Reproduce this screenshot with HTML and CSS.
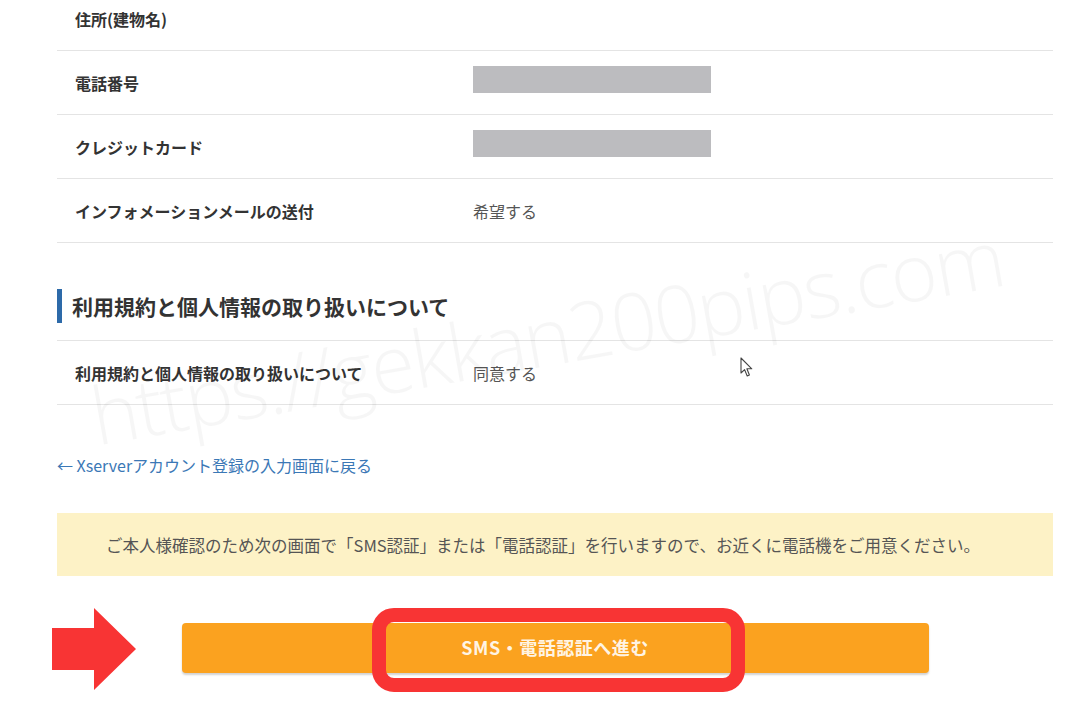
FILE: index.html
```html
<!DOCTYPE html>
<html lang="ja">
<head>
  <meta charset="UTF-8">
  <meta name="viewport" content="width=device-width, initial-scale=1.0">
  <title>お申し込み内容の確認</title>
  <link rel="stylesheet" href="styles.css">
</head>
<body>
  <div class="page">
    <!-- 確認テーブル -->
    <div class="confirm-table first">
      <div class="row">
        <div class="label">住所(建物名)</div>
        <div class="value"></div>
      </div>
      <div class="row">
        <div class="label">電話番号</div>
        <div class="value"><span class="masked"></span></div>
      </div>
      <div class="row">
        <div class="label">クレジットカード</div>
        <div class="value"><span class="masked"></span></div>
      </div>
      <div class="row">
        <div class="label">インフォメーションメールの送付</div>
        <div class="value">希望する</div>
      </div>
    </div>

    <h2 class="section-title">利用規約と個人情報の取り扱いについて</h2>
    <div class="confirm-table">
      <div class="row">
        <div class="label">利用規約と個人情報の取り扱いについて</div>
        <div class="value">同意する</div>
      </div>
    </div>

    <a class="back-link" href="#">← Xserverアカウント登録の入力画面に戻る</a>

    <div class="notice">ご本人様確認のため次の画面で「SMS認証」または「電話認証」を行いますので、お近くに電話機をご用意ください。</div>

    <div class="actions">
      <svg class="arrow" width="84" height="82" viewBox="0 0 84 82">
        <path d="M0 20 H42 V0 L84 41 L42 82 V62 H0 Z" fill="#f83434"/>
      </svg>
      <button class="submit" type="button">SMS・電話認証へ進む</button>
      <div class="highlight"></div>
    </div>

    <!-- 透かし -->
    <div class="watermark">https://gekkan200pips.com</div>
    <svg class="cursor" width="14" height="21" viewBox="0 0 14 21">
      <path d="M1 1 L1 16 L4.6 12.6 L7.2 19 L9.4 18 L6.9 11.8 L11.8 11.8 Z" fill="#fff" stroke="#444" stroke-width="1.1" stroke-linejoin="round"/>
    </svg>
  </div>
</body>
</html>
```

FILE: styles.css
```css
body{
  margin: 0;
  background: #fff;
  font-family: "Noto Sans CJK JP", "Noto Sans", sans-serif;
  color: #333;
  overflow: hidden;
}
.page{
  position: relative;
  width: 996px;
  margin-left: 57px;
  padding-bottom: 40px;
}
.confirm-table .row{
  display: grid;
  grid-template-columns: 416px 1fr;
  align-items: center;
  height: 63px;
  border-bottom: 1px solid #e4e4e4;
}
.confirm-table.first{
  margin-top: -13px;
}
.label{
  padding-left: 18px;
  font-size: 16px;
  font-weight: 700;
  color: #333;
}
.value{
  font-size: 16px;
  color: #555;
}
.masked{
  display: block;
  width: 238px;
  height: 27px;
  margin-bottom: 7px;
  background: #bcbcbf;
}
.section-title{
  margin: 46px 0 0;
  padding-left: 10px;
  border-left: 5px solid #2d6aa9;
  height: 34px;
  line-height: 34px;
  font-size: 21px;
  font-weight: 700;
  color: #333;
}
.section-title + .confirm-table{
  margin-top: 17px;
  border-top: 1px solid #e4e4e4;
}
.back-link{
  display: block;
  margin-top: 48px;
  font-size: 16px;
  line-height: 24px;
  color: #3b78b6;
  text-decoration: none;
}
.notice{
  display: flex;
  align-items: center;
  justify-content: center;
  margin-top: 36px;
  padding-right: 24px;
  height: 63px;
  background: #fdf2c6;
  font-size: 16.5px;
  color: #555;
}
.actions{
  position: relative;
  display: flex;
  justify-content: center;
  margin-top: 47px;
}
.submit{
  width: 747px;
  height: 50px;
  border: 0;
  border-radius: 4px;
  background: #fba21f;
  box-shadow: 0 2px 2px rgba(0,0,0,0.18);
  font-family: inherit;
  font-size: 18px;
  font-weight: 700;
  letter-spacing: 0.5px;
  color: #fff4e4;
  padding-bottom: 4px;
}
.arrow{
  position: absolute;
  left: -5px;
  top: -15px;
}
.highlight{
  position: absolute;
  left: 315px;
  top: -15px;
  width: 345px;
  height: 56px;
  border: 14px solid #f83434;
  border-radius: 22px;
}
.watermark{
  position: absolute;
  left: 25px;
  top: 374px;
  transform: rotate(-10deg);
  transform-origin: left top;
  font-family: "Open Sans", sans-serif;
  font-weight: 300;
  font-size: 80px;
  letter-spacing: -2px;
  color: rgba(0,0,0,0.035);
  white-space: nowrap;
  pointer-events: none;
}
.cursor{
  position: absolute;
  left: 683px;
  top: 370px;
}
```
